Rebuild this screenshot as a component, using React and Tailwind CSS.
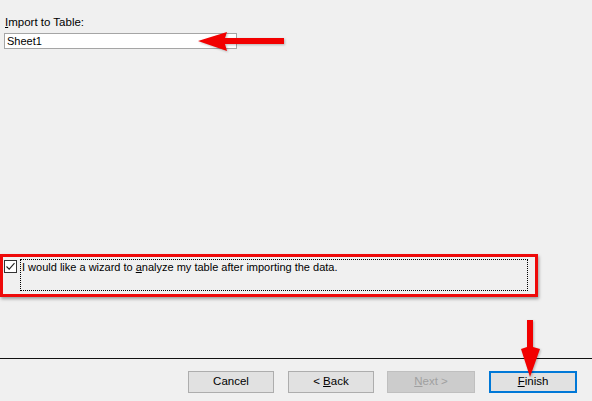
import React from "react";

const font = { fontFamily: '"Liberation Sans", Arial, sans-serif' };

function Button({ children, width, disabled, primary }) {
  let cls = "h-[22px] flex items-center justify-center text-[11.5px] ";
  if (disabled) cls += "bg-[#cccccc] border border-[#bfbfbf] text-[#a0a0a0]";
  else if (primary) cls += "bg-[#e1e1e1] border-2 border-[#0078d7] text-black";
  else cls += "bg-[#e1e1e1] border border-[#adadad] text-black";
  return (
    <div className={cls} style={{ width }}>
      {children}
    </div>
  );
}

export default function App() {
  return (
    <div
      className="relative w-[592px] h-[401px] bg-[#f0f0f0] overflow-hidden text-black flex flex-col"
      style={font}
    >
      {/* table name */}
      <div className="pt-[15px] pl-[5px] text-[11.5px] leading-[14px]">
        <span className="underline">I</span>mport to Table:
      </div>
      <div className="mt-[4px] ml-[4px] w-[233px] h-[16px] bg-white border border-[#a5a5a5] flex items-center pl-[2px] text-[11px]">
        Sheet1
      </div>

      {/* wizard checkbox, highlighted */}
      <div className="mt-[205px] w-[538px] h-[43px] border-[3px] border-[#ee0a0a] shadow-[1px_2px_3px_rgba(0,0,0,0.35)] flex items-start pt-[2px] pl-[1px] gap-[3px]">
        <div className="mt-[1px] w-[13px] h-[13px] bg-white border border-[#333] flex items-center justify-center shrink-0">
          <svg width="11" height="11" viewBox="0 0 11 11">
            <path d="M1.5 5.5 L4.2 8.2 L9.5 2.2" fill="none" stroke="#222" strokeWidth="1.1" />
          </svg>
        </div>
        <div className="w-[508px] h-[32px] border border-dotted border-black pl-[1px] pt-[1px] text-[11px] leading-[13px]">
          I would like a wizard to <span className="underline">a</span>nalyze my table after importing the data.
        </div>
      </div>

      {/* separator */}
      <div className="mt-[61px] h-px w-full bg-[#111]" />

      {/* buttons */}
      <div className="mt-[12px] flex pl-[188px]">
        <Button width={86}>Cancel</Button>
        <div className="w-[14px]" />
        <Button width={86}>
          &lt; <span className="underline ml-[3px]">B</span>ack
        </Button>
        <div className="w-[13px]" />
        <Button width={88} disabled>
          <span className="underline">N</span>ext &gt;
        </Button>
        <div className="w-[14px]" />
        <Button width={88} primary>
          <span className="underline">F</span>inish
        </Button>
      </div>

      {/* annotation arrows */}
      <svg
        className="absolute left-[196px] top-[30px] drop-shadow-[1px_1px_1px_rgba(0,0,0,0.25)]"
        width="90"
        height="24"
        viewBox="0 0 90 24"
      >
        <polygon points="2,11 31,2 29,8 88,8 88,14 29,14 31,21" fill="#f20000" />
      </svg>
      <svg
        className="absolute left-[518px] top-[318px] drop-shadow-[1px_1px_1px_rgba(0,0,0,0.25)]"
        width="24"
        height="62"
        viewBox="0 0 24 62"
      >
        <polygon points="9,2 15,2 15,29 22,31 12,59 3,31 9,29" fill="#f20000" />
      </svg>
    </div>
  );
}
